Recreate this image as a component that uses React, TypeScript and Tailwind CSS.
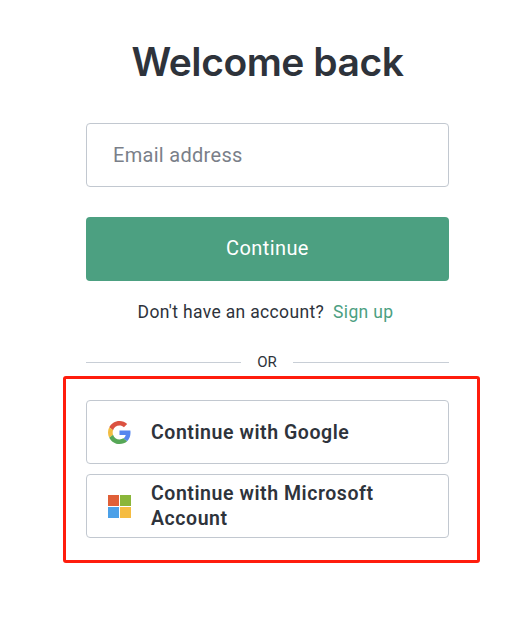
function GoogleLogo() {
  return (
    <svg viewBox="0 0 48 48" className="h-[23px] w-[23px] shrink-0">
      <path fill="#db5140" d="M24 9.5c3.54 0 6.71 1.22 9.21 3.6l6.85-6.85C35.9 2.38 30.47 0 24 0 14.62 0 6.51 5.38 2.56 13.22l7.98 6.19C12.43 13.72 17.74 9.5 24 9.5z" />
      <path fill="#5686ee" d="M46.98 24.55c0-1.57-.15-3.09-.38-4.55H24v9.02h12.94c-.58 2.96-2.26 5.48-4.78 7.18l7.73 6c4.51-4.18 7.09-10.36 7.09-17.65z" />
      <path fill="#f2bd42" d="M10.53 28.59c-.48-1.45-.76-2.99-.76-4.59s.27-3.14.76-4.59l-7.98-6.19C.92 16.46 0 20.12 0 24c0 3.88.92 7.54 2.56 10.78l7.97-6.19z" />
      <path fill="#56a757" d="M24 48c6.48 0 11.93-2.13 15.89-5.81l-7.73-6c-2.15 1.45-4.92 2.3-8.16 2.3-6.26 0-11.57-4.22-13.47-9.91l-7.98 6.19C6.51 42.62 14.62 48 24 48z" />
    </svg>
  );
}

function MicrosoftLogo() {
  return (
    <svg viewBox="0 0 23 23" className="h-[23px] w-[23px] shrink-0">
      <path fill="#e05f37" d="M0 0h11v11H0z" />
      <path fill="#8ab63a" d="M12 0h11v11H12z" />
      <path fill="#4ba0e8" d="M0 12h11v11H0z" />
      <path fill="#f5bc42" d="M12 12h11v11H12z" />
    </svg>
  );
}

export default function App() {
  return (
    <main className="h-[633px] w-[528px] bg-white pt-[37px] font-['Roboto','Liberation_Sans',sans-serif] text-[#2e333b]">
      <div className="ml-[86px] w-[363px]">
        <h1 className="text-center font-['Inter','Roboto',sans-serif] text-[39px] leading-[50px] font-semibold tracking-[-0.45px] whitespace-nowrap">
          Welcome back
        </h1>
        <input
          aria-label="Email address"
          placeholder="Email address"
          className="mt-[36px] block h-[64px] w-full rounded-[4px] border border-[#c2c8d0] pl-[26px] text-[20px] tracking-[0.3px] outline-none placeholder:text-[#7a7f89]"
        />
        <button className="mt-[30px] block h-[64px] w-full rounded-[4px] bg-[#4ca081] pb-[2px] text-[20px] tracking-[0.4px] text-white">
          Continue
        </button>
        <p className="mt-[18px] flex justify-center gap-[9px] pr-[3px] text-[17.5px] leading-[26px] tracking-[0.34px] whitespace-nowrap">
          <span className="-ml-px">Don't have an account?</span>
          <a className="text-[#4ca081]">Sign up</a>
        </p>
        <div className="mt-[27px] flex h-[20px] items-center text-[15px]">
          <i className="h-px w-[155px] bg-[#c8ced6]" />
          <span className="flex-1 text-center">OR</span>
          <i className="h-px w-[156px] bg-[#c8ced6]" />
        </div>
      </div>
      <section className="mt-[4px] ml-[63px] h-[187px] w-[417px] rounded-[3px] border-[3px] border-[#ff1d0d] pt-[21px] pl-[20px] text-[19.5px] leading-[25px] font-semibold tracking-[0.56px]">
        <button className="flex h-[64px] w-[363px] items-center rounded-[4px] border border-[#c2c8d0] pl-[21px] text-left">
          <GoogleLogo />
          <span className="ml-[20px]">Continue with Google</span>
        </button>
        <button className="mt-[10px] flex h-[64px] w-[363px] items-center rounded-[4px] border border-[#c2c8d0] pl-[21px] text-left">
          <MicrosoftLogo />
          <span className="ml-[20px]">
            Continue with Microsoft
            <br />
            Account
          </span>
        </button>
      </section>
    </main>
  );
}
